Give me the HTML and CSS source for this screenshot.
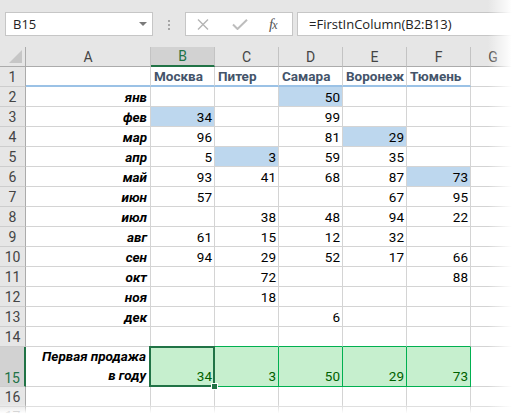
FILE: index.html
```html
<!DOCTYPE html>
<html>
<head>
  <meta charset="utf-8">
  <title>FirstInColumn</title>
  <link rel="stylesheet" href="styles.css">
</head>
<body>
  <div class="app">
    <!-- Строка формул -->
    <div class="toolbar">
      <div class="namebox"><span>B15</span><i class="caret"></i></div>
      <div class="grip"><i></i><i></i><i></i></div>
      <div class="fxbox">
        <svg class="ico-x" width="12" height="11" viewBox="0 0 12 11"><path d="M1 0.5 L11 10.5 M11 0.5 L1 10.5" stroke="#b4b4b4" stroke-width="1.4" fill="none"/></svg>
        <svg class="ico-ok" width="16" height="11" viewBox="0 0 16 11"><path d="M1 5.5 L5.5 10 L15 0.8" stroke="#bdbdbd" stroke-width="2" fill="none"/></svg>
        <span class="fx">f<small>x</small></span>
      </div>
      <div class="formula">=FirstInColumn(B2:B13)</div>
    </div>

    <!-- Лист -->
    <div class="sheet" id="sheet"></div>

    <div class="fade-right"></div>
    <div class="fade-bottom"></div>
  </div>

  <script>
    var sheet = document.getElementById("sheet");

    function cell(cls, text) {
      var d = document.createElement("div");
      d.className = "c " + cls;
      var s = document.createElement("span");
      s.textContent = text || "";
      d.appendChild(s);
      sheet.appendChild(d);
      return d;
    }

    // заголовки столбцов
    cell("corner", "");
    ["A", "B", "C", "D", "E", "F", "G"].forEach(function (l) {
      cell("colh" + (l == "B" ? " sel" : ""), l);
    });

    // строка 1 - города
    cell("rowh", "1");
    cell("h3", "");
    ["Москва", "Питер", "Самара", "Воронеж", "Тюмень"].forEach(function (t) {
      cell("h3", t);
    });
    cell("", "");

    // продажи по месяцам, * = первая продажа
    var months = ["янв", "фев", "мар", "апр", "май", "июн", "июл", "авг", "сен", "окт", "ноя", "дек"];
    var data = [
      ["", "", "*50", "", ""],
      ["*34", "", "99", "", ""],
      ["96", "", "81", "*29", ""],
      ["5", "*3", "59", "35", ""],
      ["93", "41", "68", "87", "*73"],
      ["57", "", "", "67", "95"],
      ["", "38", "48", "94", "22"],
      ["61", "15", "12", "32", ""],
      ["94", "29", "52", "17", "66"],
      ["", "72", "", "", "88"],
      ["", "18", "", "", ""],
      ["", "", "6", "", ""]
    ];
    for (var r = 0; r < data.length; r++) {
      cell("rowh", String(r + 2));
      cell("mon", months[r]);
      data[r].forEach(function (v) {
        var hl = v.charAt(0) == "*";
        cell("num" + (hl ? " hl" : ""), hl ? v.slice(1) : v);
      });
      cell("", "");
    }

    // строка 14
    cell("rowh", "14");
    cell("", "");
    for (var i = 0; i < 5; i++) cell("above-good", "");
    cell("", "");

    // строка 15 - итог
    cell("rowh tall sel", "15");
    cell("label tall", "Первая продажа\nв году");
    [34, 3, 50, 29, 73].forEach(function (v, i) {
      var d = cell("num good tall" + (i == 0 ? " active" : ""), String(v));
      if (i == 0) {
        var f = document.createElement("b");
        f.className = "handle";
        d.appendChild(f);
      }
    });
    cell("tall", "");

    // строки 16-17
    ["16", "17"].forEach(function (n) {
      cell("rowh", n);
      for (var k = 0; k < 7; k++) cell("", "");
    });
  </script>
</body>
</html>
```

FILE: styles.css
```css
body {
  margin: 0;
  background: #fff;
  font-family: Roboto, "Liberation Sans", sans-serif;
}
.app {
  position: relative;
  width: 516px;
  height: 416px;
  overflow: hidden;
}

/* строка формул */
.toolbar {
  height: 47px;
  box-sizing: border-box;
  padding: 12px 0 0 5px;
  background: #e6e6e6;
  display: flex;
  align-items: flex-start;
  font-family: "Open Sans", "Noto Sans", sans-serif;
  font-size: 13px;
  color: #222;
}
.namebox {
  width: 148px;
  height: 24px;
  box-sizing: border-box;
  border: 1px solid #c6c6c6;
  background: #fff;
  display: flex;
  align-items: center;
  padding-left: 7px;
}
.caret {
  margin-left: auto;
  margin-right: 5px;
  border-left: 4px solid transparent;
  border-right: 4px solid transparent;
  border-top: 4px solid #7a7a7a;
}
.grip {
  width: 32px;
  padding: 8px 0 0 15px;
  box-sizing: border-box;
  display: flex;
  flex-direction: column;
  gap: 2px;
}
.grip i {
  width: 2px;
  height: 2px;
  background: #a6a6a6;
}
.fxbox {
  width: 108px;
  height: 24px;
  box-sizing: border-box;
  border: 1px solid #c6c6c6;
  background: #fff;
  display: flex;
  align-items: center;
}
.ico-x { margin-left: 11px; }
.ico-ok { margin-left: 23px; }
.fx {
  margin-left: 21px;
  font-family: "Liberation Serif", serif;
  font-style: italic;
  font-size: 15px;
  color: #555;
  letter-spacing: -1px;
}
.fx small { font-size: 12px; }
.formula {
  flex: 1;
  margin-left: 4px;
  height: 24px;
  box-sizing: border-box;
  border: 1px solid #c6c6c6;
  border-right: none;
  background: #fff;
  padding-left: 11px;
  line-height: 22px;
}

/* лист */
.sheet {
  display: grid;
  grid-template-columns: 26px 125px 64px 64px 64px 64px 64px 1fr;
  font-size: 13.5px;
  color: #000;
}
.c {
  position: relative;
  height: 20px;
  box-sizing: border-box;
  border-right: 1px solid #d4d4d4;
  border-bottom: 1px solid #d4d4d4;
  padding: 0 3px;
  display: flex;
  align-items: center;
  white-space: nowrap;
}
.tall {
  height: 40px;
  align-items: flex-end;
  padding-bottom: 2px;
}
.corner, .colh, .rowh {
  background: #e6e6e6;
  color: #444;
  justify-content: center;
  padding: 0;
  font-size: 14px;
}
.colh {
  border-right-color: #c3c3c3;
  border-bottom-color: #ababab;
}
.corner {
  border-right-color: #ababab;
  border-bottom-color: #ababab;
}
.corner::after {
  content: "";
  position: absolute;
  right: 3px;
  bottom: 3px;
  border-left: 13px solid transparent;
  border-bottom: 13px solid #c6c6c6;
}
.rowh {
  border-right-color: #ababab;
  border-bottom-color: #cdcdcd;
}
.colh.sel {
  background: #d2d2d2;
  color: #217346;
  border-bottom: 2px solid #217346;
}
.rowh.sel {
  background: #d2d2d2;
  color: #217346;
  border-right: 2px solid #217346;
}

.h3 {
  border-bottom: 2px solid #9bc2e6;
  color: #44546a;
  font-weight: bold;
}
.mon, .label {
  justify-content: flex-end;
  font-weight: bold;
  font-style: italic;
}
.label {
  white-space: pre-line;
  text-align: right;
  line-height: 19px;
  padding-right: 4px;
  padding-bottom: 1px;
}
.num {
  justify-content: flex-end;
  padding-right: 2px;
}
.hl {
  background: #bdd7ee;
}
.above-good {
  border-bottom-color: #00b050;
}
.good {
  background: #c6efce;
  color: #006100;
  border-right-color: #00b050;
  border-bottom-color: #00b050;
}
.active {
  z-index: 2;
}
.active::after {
  content: "";
  position: absolute;
  top: -1px;
  left: -2px;
  right: -1px;
  bottom: -1px;
  border: 2px solid #217346;
}
.handle {
  position: absolute;
  right: -4px;
  bottom: -4px;
  width: 5px;
  height: 5px;
  background: #217346;
  border: 1px solid #fff;
  z-index: 3;
}

/* края скриншота */
.fade-right {
  position: absolute;
  top: 0;
  right: 0;
  width: 28px;
  height: 100%;
  background: linear-gradient(to right, rgba(255,255,255,0), #fff 85%);
}
.fade-bottom {
  position: absolute;
  left: 0;
  right: 0;
  bottom: 0;
  height: 12px;
  background: linear-gradient(to bottom, rgba(255,255,255,0), #fff 80%);
}
```
